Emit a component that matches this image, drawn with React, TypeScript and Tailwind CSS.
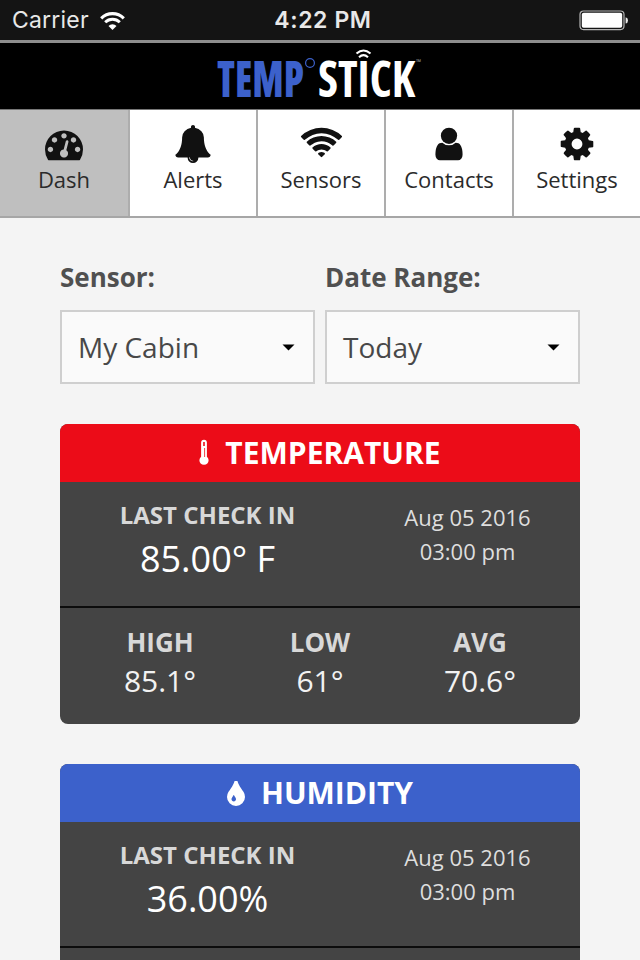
import React from 'react';

type IconProps = { className?: string };

const DashIcon = ({ className }: IconProps) => (
    <svg viewBox="0 0 1792 1792" fill="currentColor" className={className}>
        <path d="M384 1152q0-53-37.5-90.5t-90.5-37.5-90.5 37.5-37.5 90.5 37.5 90.5 90.5 37.5 90.5-37.5 37.5-90.5zm192-448q0-53-37.5-90.5t-90.5-37.5-90.5 37.5-37.5 90.5 37.5 90.5 90.5 37.5 90.5-37.5 37.5-90.5zm428 481l101-382q6-26-7.5-48.5t-38.5-29.5-48 6.5-30 39.5l-101 382q-60 5-107 43.5t-63 98.5q-20 77 20 146t117 89 146-20 89-117q16-60-6-117t-72-91zm660-33q0-53-37.5-90.5t-90.5-37.5-90.5 37.5-37.5 90.5 37.5 90.5 90.5 37.5 90.5-37.5 37.5-90.5zm-640-640q0-53-37.5-90.5t-90.5-37.5-90.5 37.5-37.5 90.5 37.5 90.5 90.5 37.5 90.5-37.5 37.5-90.5zm448 192q0-53-37.5-90.5t-90.5-37.5-90.5 37.5-37.5 90.5 37.5 90.5 90.5 37.5 90.5-37.5 37.5-90.5zm320 448q0 261-141 483-19 29-54 29h-1402q-35 0-54-29-141-221-141-483 0-182 71-348t191-286 286-191 348-71 348 71 286 191 191 286 71 348z" />
    </svg>
);

const BellIcon = ({ className }: IconProps) => (
    <svg viewBox="0 0 1792 1792" fill="currentColor" className={className}>
        <path d="M912 1696q0-16-16-16-59 0-101.5-42.5t-42.5-101.5q0-16-16-16t-16 16q0 73 51.5 124.5t124.5 51.5q16 0 16-16zm816-288q0 52-38 90t-90 38h-448q0 106-75 181t-181 75-181-75-75-181h-448q-52 0-90-38t-38-90q50-42 91-88t85-119.5 74.5-158.5 50-206 19.5-260q0-152 117-282.5t307-158.5q-8-19-8-39 0-40 28-68t68-28 68 28 28 68q0 20-8 39 190 28 307 158.5t117 282.5q0 139 19.5 260t50 206 74.5 158.5 85 119.5 91 88z" />
    </svg>
);

const WifiIcon = ({ className }: IconProps) => (
    <svg viewBox="0 0 2048 1792" fill="currentColor" className={className}>
        <path d="M1024 1523q-20 0-93-73.5t-73-93.5q0-32 62.5-54t103.5-22 103.5 22 62.5 54q0 20-73 93.5t-93 73.5zm270-271q-2 0-40-25t-101.5-50-128.5-25-128.5 25-101 50-40.5 25q-18 0-93.5-75t-75.5-93q0-13 10-23 78-77 196-121t233-44 233 44 196 121q10 10 10 23 0 18-75.5 93t-93.5 75zm273-273q-11 0-23-8-136-105-252-154.5t-268-49.5q-85 0-170.5 22t-149 53-113.5 62-79 53-31 22q-17 0-92-75t-75-93q0-12 10-22 132-132 320-205t380-73 380 73 320 205q10 10 10 22 0 18-75 93t-92 75zm271-271q-11 0-22-9-179-157-371.5-236.5t-420.5-79.5-420.5 79.5-371.5 236.5q-11 9-22 9-17 0-92.5-75t-75.5-93q0-13 10-23 187-186 445-288t527-102 527 102 445 288q10 10 10 23 0 18-75.5 93t-92.5 75z" />
    </svg>
);

const UserIcon = ({ className }: IconProps) => (
    <svg viewBox="0 0 1792 1792" fill="currentColor" className={className}>
        <path d="M1536 1399q0 109-62.5 187t-150.5 78h-854q-88 0-150.5-78t-62.5-187q0-85 8.5-160.5t31.5-152 58.5-131 94-89 134.5-34.5q131 128 313 128t313-128q76 0 134.5 34.5t94 89 58.5 131 31.5 152 8.5 160.5z" />
        <circle cx="896" cy="512" r="384" />
    </svg>
);

const CogIcon = ({ className }: IconProps) => (
    <svg viewBox="0 0 1792 1792" fill="currentColor" className={className}>
        <path d="M1152 896q0-106-75-181t-181-75-181 75-75 181 75 181 181 75 181-75 75-181zm512-109v222q0 12-8 23t-20 13l-185 28q-19 54-39 91 35 50 107 138 10 12 10 25t-9 23q-27 37-99 108t-94 71q-12 0-26-9l-138-108q-44 23-91 38-16 136-29 186-7 28-36 28h-222q-14 0-24.5-8.5t-11.5-21.5l-28-184q-49-16-90-37l-141 107q-10 9-25 9-14 0-25-11-126-114-165-168-7-10-7-23 0-12 8-23 15-21 51-66.5t54-70.5q-27-50-41-99l-183-27q-13-2-21-12.5t-8-23.5v-222q0-12 8-23t19-13l186-28q14-46 39-92-40-57-107-138-10-12-10-24 0-10 9-23 26-36 98.5-107.5t94.5-71.5q13 0 26 10l138 107q44-23 91-38 16-136 29-186 7-28 36-28h222q14 0 24.5 8.5t11.5 21.5l28 184q49 16 90 37l142-107q9-9 24-9 13 0 25 10 129 119 165 170 7 8 7 22 0 12-8 23-15 21-51 66.5t-54 70.5q26 50 41 98l183 28q13 2 21 12.5t8 23.5z" />
    </svg>
);

const ThermometerIcon = () => (
    <svg viewBox="0 0 10 28" className="mr-[16px] h-[28px] w-[10px]">
        <path d="M2.1 3.6a2.9 2.9 0 0 1 5.8 0v14.1a4.6 4.6 0 1 1-5.8 0z" fill="#fff" />
        <path d="M5 3v4" stroke="#ec0c18" strokeWidth="1.6" />
        <path d="M5.6 9v9" stroke="#ec0c18" strokeWidth="0.8" />
    </svg>
);

const DropIcon = () => (
    <svg viewBox="384 128 1024 1408" fill="#fff" className="mr-[16px] h-[25px] w-[18px]">
        <path d="M896 1152q0-36-20-69-1-1-15.5-22.5t-25.5-38-25-44-21-50.5q-4-16-21-16t-21 16q-7 23-21 50.5t-25 44-25.5 38-15.5 22.5q-20 33-20 69 0 53 37.5 90.5t90.5 37.5 90.5-37.5 37.5-90.5zm512-128q0 212-150 362t-362 150-362-150-150-362q0-145 81-275 6-9 62.5-90.5t101-151 99.5-178 83-201.5q9-30 34-47t51-17 51.5 17 33.5 47q28 93 83 201.5t99.5 178 101 151 62.5 90.5q81 127 81 275z" />
    </svg>
);

const StatusBar = () => (
    <div className="grid h-[43px] grid-cols-[1fr_auto_1fr] items-center border-t border-b-[3px] border-t-[#141414] border-b-[#8e8e8e] bg-[#141414] pr-[11px] pl-[12px] font-['Inter',sans-serif] text-[23px] leading-none text-[#e8e8e8]">
        <div className="flex items-center gap-[11px]">
            <span className="tracking-[0.2px]">Carrier</span>
            <svg viewBox="0 0 25 18" fill="none" stroke="#fff" className="h-[18px] w-[25px]">
                <path d="M1.2 6.3a16 16 0 0 1 22.6 0" strokeWidth="3.1" />
                <path d="M5.2 10.3a10.4 10.4 0 0 1 14.6 0" strokeWidth="2.9" />
                <path d="M12.5 18l-4-4.1a5.7 5.7 0 0 1 8 0z" fill="#fff" stroke="none" />
            </svg>
        </div>
        <span className="pl-[5px] font-semibold tracking-[0.6px]">4:22 PM</span>
        <svg viewBox="0 0 50 21" className="h-[21px] w-[50px] justify-self-end">
            <rect x="1" y="1" width="44" height="18.6" rx="3.5" fill="none" stroke="#b5b5b5" strokeWidth="1.2" />
            <rect x="2.8" y="2.8" width="40.4" height="15" rx="1.8" fill="#fff" />
            <path d="M46.6 7.2q2.4.6 2.4 3.2t-2.4 3.2z" fill="#e8e8e8" />
        </svg>
    </div>
);

const Logo = () => (
    <svg viewBox="0 0 210 66" className="h-[66px] w-[210px] overflow-visible font-['Open_Sans',sans-serif] [font-stretch:75%]">
        <text x="2" y="53.7" fontSize="49.5" fontWeight="800" fill="#3c61cb" textLength="87" lengthAdjust="spacingAndGlyphs">TEMP</text>
        <circle cx="95" cy="20" r="4.4" fill="none" stroke="#3c61cb" strokeWidth="1.2" />
        <text x="103" y="53.7" fontSize="49.5" fontWeight="700" fill="#fff" textLength="97" lengthAdjust="spacingAndGlyphs">STICK</text>
        <path d="M141.5 10.5q7-6 14 0M144 14.2q4.5-4 9 0" fill="none" stroke="#fff" strokeWidth="2.1" />
        <text x="201" y="22" fontSize="8" fill="#aaa">™</text>
    </svg>
);

const tabs = [
    { label: 'Dash', icon: <DashIcon className="h-[38px] w-[38px]" /> },
    { label: 'Alerts', icon: <BellIcon className="h-[38px] w-[38px]" /> },
    { label: 'Sensors', icon: <WifiIcon className="h-[38px] w-[43px]" /> },
    { label: 'Contacts', icon: <UserIcon className="h-[38px] w-[38px]" /> },
    { label: 'Settings', icon: <CogIcon className="h-[38px] w-[38px]" /> },
];

const TabBar = () => (
    <nav className="grid h-[108px] grid-cols-5 border-b-2 border-[#a6a6a6] bg-white">
        {tabs.map((tab, i) => (
            <button
                key={tab.label}
                className={
                    i === 0
                        ? 'flex flex-col items-center bg-[#bfbfbf] pt-[15px] text-[#111]'
                        : 'flex flex-col items-center border-l-2 border-[#adadad] pt-[15px] text-[#111]'
                }
            >
                {tab.icon}
                <span className="mt-px text-[22px] leading-[30px] text-[#2b2b2b]">{tab.label}</span>
            </button>
        ))}
    </nav>
);

const SelectField = ({ label, value }: { label: string; value: string }) => (
    <div>
        <div className="text-[26px] leading-[32px] font-bold text-[#505050]">{label}</div>
        <div className="mt-[17px] flex h-[74px] items-center justify-between border-2 border-[#cfcfcf] bg-[#fafafa] pr-[18px] pl-[16px]">
            <span className="text-[28px] text-[#484848]">{value}</span>
            <svg viewBox="0 0 13 7" className="h-[7px] w-[13px]">
                <path d="M.5.5h12l-6 6z" fill="#000" />
            </svg>
        </div>
    </div>
);

type CardProps = {
    title: string;
    icon: React.ReactNode;
    headerClass: string;
    value: string;
    stats: { label: string; value: string }[];
};

const ReadingCard = ({ title, icon, headerClass, value, stats }: CardProps) => (
    <section className="h-[300px] overflow-hidden rounded-lg bg-[#444]">
        <h2 className={`flex h-[58px] items-center justify-center text-[30px] font-bold text-white ${headerClass}`}>
            {icon}
            <span className="pb-[2px]">{title}</span>
        </h2>
        <div className="grid h-[124px] grid-cols-[295px_225px] text-center">
            <div className="pt-[17px]">
                <div className="text-[24px] leading-[32px] font-bold text-[#d8d8d8]">LAST CHECK IN</div>
                <div className="mt-[6px] text-[36px] leading-[44px] text-white">{value}</div>
            </div>
            <div className="pt-[18px] text-[22px] leading-[34px] text-[#dedede]">
                <div>Aug 05 2016</div>
                <div>03:00 pm</div>
            </div>
        </div>
        <div className="grid h-[118px] grid-cols-3 border-t-2 border-[#0c0c0c] px-[20px] pt-[18px] text-center">
            {stats.map((s) => (
                <div key={s.label}>
                    <div className="text-[26px] leading-[32px] font-bold text-[#d8d8d8]">{s.label}</div>
                    <div className="mt-[3px] text-[30px] leading-[40px] text-[#f2f2f2]">{s.value}</div>
                </div>
            ))}
        </div>
    </section>
);

export default function App() {
    return (
        <div className="h-[960px] w-[640px] overflow-hidden bg-[#f4f4f4] font-['Open_Sans',sans-serif]">
            <StatusBar />
            <header className="flex h-[67px] justify-center border-b border-[#777] bg-black">
                <Logo />
            </header>
            <TabBar />
            <main className="px-[60px] pt-[43px]">
                <div className="mb-[40px] grid grid-cols-2 gap-[10px]">
                    <SelectField label="Sensor:" value="My Cabin" />
                    <SelectField label="Date Range:" value="Today" />
                </div>
                <div className="flex flex-col gap-[40px]">
                    <ReadingCard
                        title="TEMPERATURE"
                        icon={<ThermometerIcon />}
                        headerClass="bg-[#ec0c18]"
                        value="85.00° F"
                        stats={[
                            { label: 'HIGH', value: '85.1°' },
                            { label: 'LOW', value: '61°' },
                            { label: 'AVG', value: '70.6°' },
                        ]}
                    />
                    <ReadingCard
                        title="HUMIDITY"
                        icon={<DropIcon />}
                        headerClass="bg-[#3c61cb]"
                        value="36.00%"
                        stats={[]}
                    />
                </div>
            </main>
        </div>
    );
}
